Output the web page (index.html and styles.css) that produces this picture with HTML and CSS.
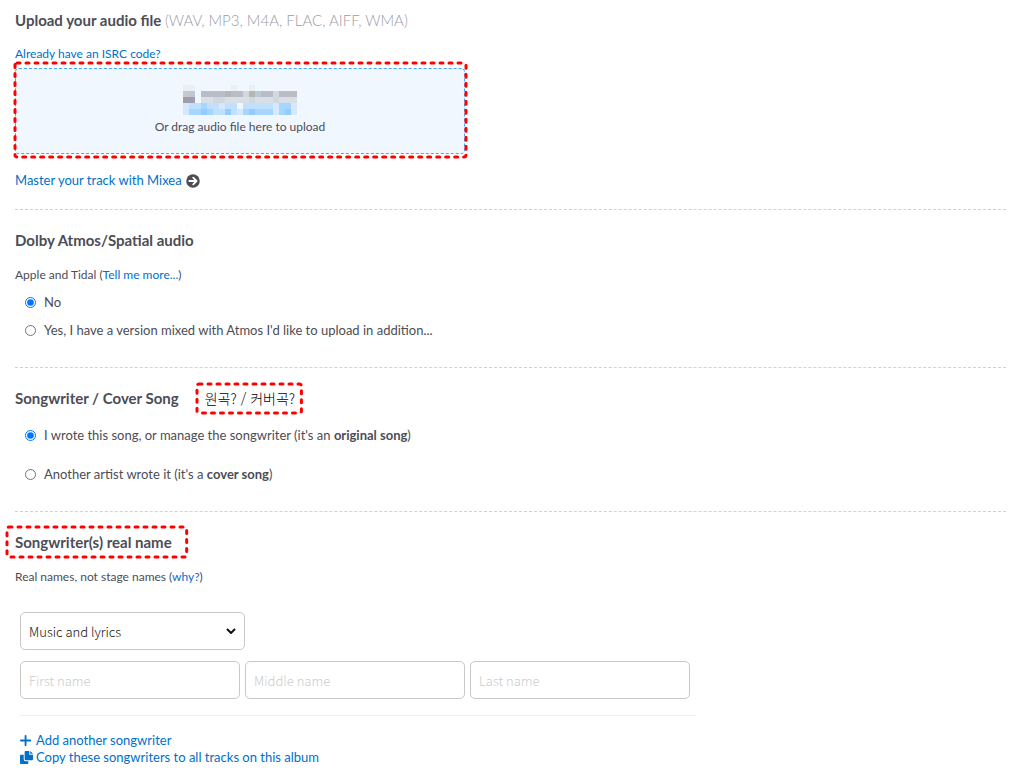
FILE: index.html
```html
<!DOCTYPE html>
<html lang="en">

<head>
  <meta charset="UTF-8">
  <meta name="viewport" content="width=device-width, initial-scale=1.0">
  <title>Upload track</title>
  <link rel="stylesheet" href="styles.css">
</head>

<body>
  <form class="track-form">
    <section class="section">
      <h2 class="heading">Upload your audio file <span class="formats">(WAV, MP3, M4A, FLAC, AIFF, WMA)</span></h2>
      <a class="isrc-link" href="#">Already have an ISRC code?</a>
      <div class="upload">
        <div class="drop-zone">
          <svg class="mosaic" viewBox="0 0 19 5" shape-rendering="crispEdges" aria-hidden="true">
            <path fill="#e8f0f5" d="M0 0h2v1h-2zM8 0h1v1h-1zM11 0h1v1h-1z" />
            <path fill="#c8c8c8" d="M0 1h1v1h-1z" />
            <path fill="#bbc8d8" d="M1 1h1v1h-1zM12 1h1v1h-1z" />
            <path fill="#b9bdc8" d="M3 1h4v1h-4zM8 1h2v1h-2zM13 1h2v1h-2zM16 1h3v1h-3z" />
            <path fill="#b7b6b6" d="M7 1h1v1h-1zM11 1h1v1h-1z" />
            <path fill="#d3d8df" d="M10 1h1v1h-1zM15 1h1v1h-1z" />
            <path fill="#a09fa9" d="M0 2h2v1h-2z" />
            <path fill="#dadfe5" d="M3 2h16v1h-16z" />
            <path fill="#d0d7e0" d="M5 2h2v1h-2zM11 2h1v1h-1zM15 2h1v1h-1z" />
            <path fill="#d5e8fe" d="M0 3h1v2h-1zM6 3h1v1h-1zM15 3h1v2h-1zM18 3h1v2h-1zM9 4h1v1h-1z" />
            <path fill="#c0e0ff" d="M1 3h5v1h-5zM7 3h2v1h-2zM10 3h5v1h-5zM5 4h2v1h-2zM8 4h1v1h-1z" />
            <path fill="#a5d6ff" d="M3 3h1v1h-1zM16 3h2v1h-2zM1 4h4v1h-4zM10 4h5v1h-5zM16 4h1v1h-1z" />
            <path fill="#93ccff" d="M3 4h1v1h-1zM7 4h1v1h-1zM11 4h1v1h-1zM17 4h1v1h-1z" />
          </svg>
          <label class="drop-text" for="audio-file">Or drag audio file here to upload</label>
          <input class="file-input" type="file" id="audio-file">
        </div>
        <svg class="marker" aria-hidden="true"><rect width="100%" height="100%" rx="2" /></svg>
      </div>
      <p class="mixea"><a href="#">Master your track with Mixea</a>
        <svg class="arrow-icon" viewBox="0 0 512 512" aria-hidden="true">
          <circle cx="256" cy="256" r="248" />
          <path fill="none" stroke="#fff" stroke-width="66" stroke-linecap="round" stroke-linejoin="round" d="M120 256h262M264 136l122 120-122 120" />
        </svg>
      </p>
    </section>

    <section class="section">
      <h2 class="heading">Dolby Atmos/Spatial audio</h2>
      <p class="note">Apple and Tidal (<a href="#">Tell me more...</a>)</p>
      <div class="options">
        <label class="option"><input type="radio" name="atmos" checked> <span>No</span></label>
        <label class="option"><input type="radio" name="atmos"> <span>Yes, I have a version mixed with Atmos I'd like to upload in addition...</span></label>
      </div>
    </section>

    <section class="section">
      <div class="heading-row">
        <h2 class="heading">Songwriter / Cover Song</h2>
        <span class="korean" lang="ko">원곡? / 커버곡?
          <svg class="marker" aria-hidden="true"><rect width="100%" height="100%" rx="2" /></svg>
        </span>
      </div>
      <div class="options cover-options">
        <label class="option"><input type="radio" name="cover" checked> <span>I wrote this song, or manage the songwriter (it's an <b>original song</b>)</span></label>
        <label class="option"><input type="radio" name="cover"> <span>Another artist wrote it (it's a <b>cover song</b>)</span></label>
      </div>
    </section>

    <section class="section">
      <h2 class="heading name-heading">Songwriter(s) real name
        <svg class="marker" aria-hidden="true"><rect width="100%" height="100%" rx="2" /></svg>
      </h2>
      <p class="note">Real names, not stage names (<a href="#">why?</a>)</p>
      <div class="songwriter">
        <div class="select-wrap">
          <select class="field" aria-label="Songwriter role">
            <option>Music and lyrics</option>
            <option>Music</option>
            <option>Lyrics</option>
          </select>
          <svg class="chevron" viewBox="0 0 10 6" aria-hidden="true"><path d="M1 1l4 4 4-4" /></svg>
        </div>
        <div class="names">
          <input class="field" type="text" placeholder="First name" aria-label="First name">
          <input class="field" type="text" placeholder="Middle name" aria-label="Middle name">
          <input class="field" type="text" placeholder="Last name" aria-label="Last name">
        </div>
      </div>
      <div class="actions">
        <a href="#">
          <svg class="action-icon" viewBox="0 0 14 14" aria-hidden="true"><path d="M6 2v10M1 7h10" fill="none" stroke="currentColor" stroke-width="2" stroke-linecap="round" /></svg>
          Add another songwriter
        </a>
        <a href="#">
          <svg class="action-icon" viewBox="0 0 14 14" aria-hidden="true"><path d="M6 0h4v4h4v5q0 1-1 1H6q-1 0-1-1V1q0-1 1-1zM11 0l3 3h-3zM1 4h3v5q0 2 2 2h3v2q0 1-1 1H1q-1 0-1-1V5q0-1 1-1z" /></svg>
          Copy these songwriters to all tracks on this album
        </a>
      </div>
    </section>
  </form>
</body>

</html>
```

FILE: styles.css
```css
* {
  box-sizing: border-box;
}

body {
  font-family: Lato, sans-serif;
  font-size: 13px;
  line-height: 17px;
  margin: 0;
  padding: 0 7px 0 15px;
  background-color: #ffffff;
  color: #4c4d55;
}

h2,
p {
  margin: 0;
}

a {
  color: #0070c9;
  text-decoration: none;
}

b {
  font-weight: 700;
}

.section {
  padding: 20px 0 28px;
  border-bottom: 1px dashed #d2d2d2;
}

.section:first-child {
  padding: 10px 0 20px;
}

.section:last-child {
  border-bottom: none;
  padding-bottom: 0;
}

.heading {
  font-size: 15px;
  line-height: 20px;
  font-weight: 700;
}

.formats {
  font-weight: 300;
  color: #9a9ba5;
}

.isrc-link {
  display: block;
  margin-top: 15px;
  font-size: 12px;
}

.note {
  margin-top: 16px;
  font-size: 12px;
}

/* Upload box */
.upload {
  position: relative;
  max-width: 451px;
  margin-top: 1px;
  padding: 5px 1px 3px 0;
}

.drop-zone {
  display: flex;
  flex-direction: column;
  align-items: center;
  padding: 16px 0 18px;
  background-color: #f0f7ff;
  border: 1px dashed #42a8f5;
  border-radius: 4px;
}

.mosaic {
  width: 114px;
  height: 30px;
}

.drop-text {
  margin-top: 3px;
  font-size: 12px;
}

.file-input {
  display: none;
}

/* Red dotted outline over a block */
.marker {
  position: absolute;
  top: 0;
  left: 0;
  width: 100%;
  height: 100%;
  overflow: visible;
  pointer-events: none;
}

.marker rect {
  fill: none;
  stroke: #ff0000;
  stroke-width: 3;
  stroke-linecap: round;
  stroke-dasharray: 3 6;
}

.mixea {
  display: flex;
  align-items: center;
  gap: 4px;
  margin-top: 15px;
}

.arrow-icon {
  width: 14px;
  height: 14px;
  fill: #4c4d55;
}

/* Radio lists */
.options {
  display: flex;
  flex-direction: column;
  gap: 11px;
  margin-top: 11px;
  padding-left: 10px;
}

.cover-options {
  gap: 22px;
  margin-top: 19px;
}

.option {
  display: flex;
  align-items: center;
  gap: 8px;
}

.option input {
  width: 11px;
  height: 11px;
  margin: 0;
}

.heading-row {
  display: flex;
  align-items: center;
  gap: 18px;
  height: 20px;
}

.korean {
  position: relative;
  padding: 5px 6px 5px 8px;
  font-family: "Noto Sans CJK KR", sans-serif;
  font-size: 14px;
  font-weight: 300;
  line-height: 19px;
  color: #000000;
}

.name-heading {
  position: relative;
  width: fit-content;
  margin: -5px 0 -5px -8px;
  padding: 5px 15px 5px 8px;
}

/* Songwriter fields */
.songwriter {
  width: fit-content;
  margin: 27px 0 0 5px;
  padding-bottom: 16px;
  padding-right: 6px;
  border-bottom: 1px solid #f0f0f0;
}

.field {
  width: 220px;
  height: 38px;
  padding: 0 8px;
  border: 1px solid #c8c8c8;
  border-radius: 5px;
  background-color: #ffffff;
  font-family: "Noto Sans CJK KR", sans-serif;
  font-size: 13px;
  font-weight: 300;
  color: #111111;
}

.field::placeholder {
  color: #cccccc;
}

.select-wrap {
  position: relative;
  width: 225px;
}

.select-wrap .field {
  display: block;
  width: 100%;
  appearance: none;
}

.chevron {
  position: absolute;
  right: 9px;
  top: 16px;
  width: 10px;
  height: 6px;
  fill: none;
  stroke: #111111;
  stroke-width: 2;
  pointer-events: none;
}

.names {
  display: flex;
  gap: 5px;
  margin-top: 11px;
}

.actions {
  display: flex;
  flex-direction: column;
  align-items: flex-start;
  margin: 16px 0 0 5px;
}

.actions a {
  display: flex;
  align-items: center;
  gap: 3px;
}

.action-icon {
  width: 13px;
  height: 13px;
  fill: currentColor;
}
```
